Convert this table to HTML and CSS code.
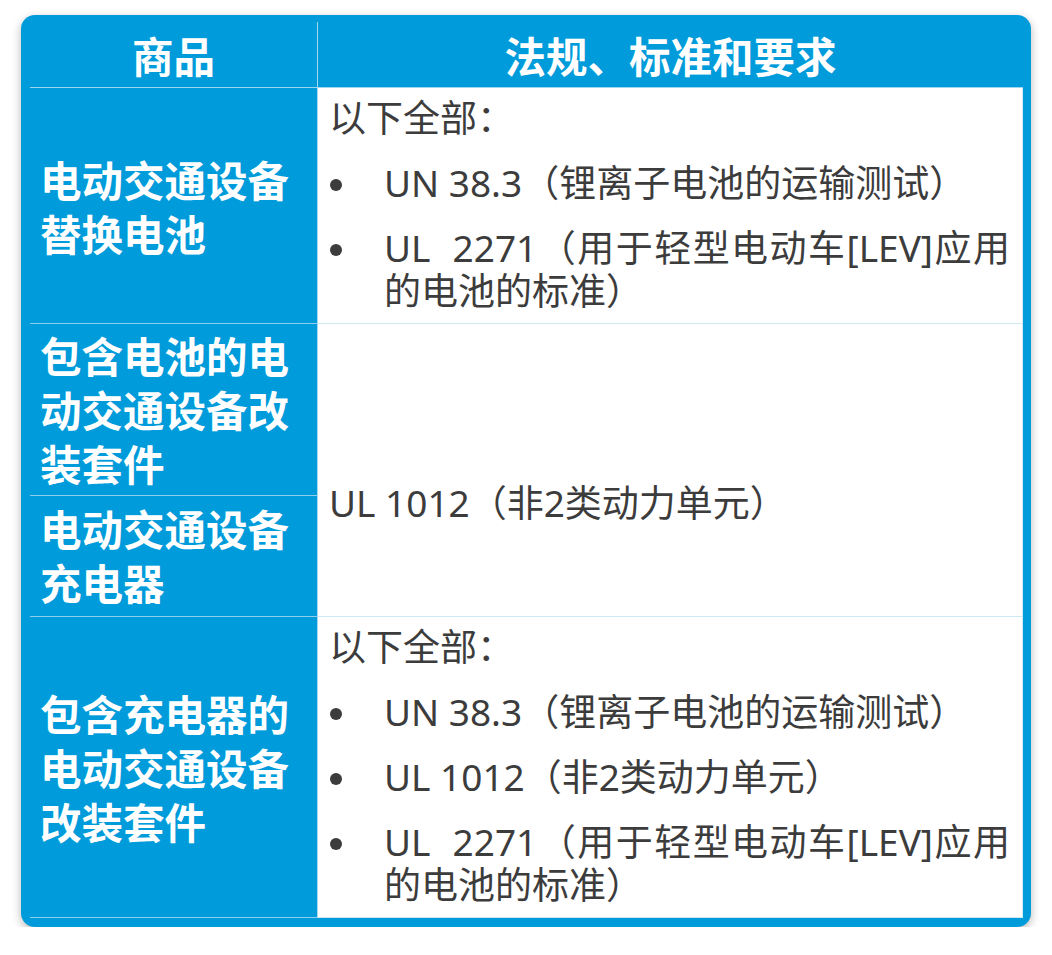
FILE: index.html
```html
<!DOCTYPE html>
<html lang="zh-CN">
<head>
<meta charset="utf-8">
<title>电动交通设备法规</title>
<link rel="stylesheet" href="styles.css">
</head>
<body>
<div class="frame">
  <div class="grid">
    <div class="th th-left">商品</div>
    <div class="th th-right">法规、标准和要求</div>

    <div class="item">电动交通设备替换电池</div>
    <div class="spec">
      <p class="lead">以下全部：</p>
      <ul class="list">
        <li><span class="txt">UN 38.3（锂离子电池的运输测试）</span></li>
        <li><span class="txt">UL&nbsp; 2271（用于轻型电动车[LEV]应用的电池的标准）</span></li>
      </ul>
    </div>

    <div class="item item-r2">包含电池的电动交通设备改装套件</div>
    <div class="spec spec-merged">UL 1012（非2类动力单元）</div>
    <div class="item item-r3">电动交通设备充电器</div>

    <div class="item">包含充电器的电动交通设备改装套件</div>
    <div class="spec">
      <p class="lead">以下全部：</p>
      <ul class="list">
        <li><span class="txt">UN 38.3（锂离子电池的运输测试）</span></li>
        <li><span class="txt">UL 1012（非2类动力单元）</span></li>
        <li><span class="txt">UL&nbsp; 2271（用于轻型电动车[LEV]应用的电池的标准）</span></li>
      </ul>
    </div>
  </div>
</div>
</body>
</html>
```

FILE: styles.css
```css
html, body {
  margin: 0;
  padding: 0;
  background: #ffffff;
}

body {
  font-family: "Noto Sans", "Noto Sans CJK SC", sans-serif;
}

.frame {
  margin: 15px 0 0 21px;
  width: 1010px;
  box-sizing: border-box;
  padding: 7px 8px 9px 9px;
  background: #009bda;
  border-radius: 14px;
  box-shadow: 0 3px 10px rgba(0, 0, 0, 0.28);
}

.grid {
  display: grid;
  grid-template-columns: 288px 705px;
}

.th {
  height: 65px;
  border-bottom: 1px solid #9fd6ef;
  color: #ffffff;
  font-family: "Noto Sans CJK SC", sans-serif;
  font-weight: 700;
  font-size: 41.5px;
  display: flex;
  align-items: center;
  justify-content: center;
}

.th-left {
  border-right: 1px solid #a6d9f0;
}

.item {
  box-sizing: border-box;
  border-right: 1px solid #a6d9f0;
  border-bottom: 1px solid #8fcfed;
  padding: 0 13px 0 10px;
  color: #ffffff;
  font-family: "Noto Sans CJK SC", sans-serif;
  font-weight: 700;
  font-size: 41.5px;
  line-height: 54px;
  display: flex;
  flex-direction: column;
  justify-content: center;
}

.item-r2 {
  padding: 4px 13px 5px 10px;
}

.item-r3 {
  padding: 5px 13px 7px 10px;
}

.spec {
  background: #ffffff;
  border-right: 1px solid #cfeaf7;
  border-bottom: 1px solid #cfeaf7;
  padding: 8px 12px 11px 11px;
  color: #3c3c3c;
  font-size: 37px;
  line-height: 43px;
}

.spec-merged {
  grid-column: 2;
  grid-row: 3 / span 2;
  padding: 64px 12px 0 11px;
  display: flex;
  align-items: center;
}

.lead {
  margin: 0;
}

.list {
  list-style: none;
  margin: 0;
  padding: 0;
}

.list li {
  margin-top: 22px;
  display: flex;
}

.list li::before {
  content: "";
  flex: none;
  width: 12px;
  height: 12px;
  border-radius: 50%;
  background: #3c3c3c;
  margin: 18px 42px 0 1px;
}

.txt {
  flex: 1;
  text-align: justify;
}
```
